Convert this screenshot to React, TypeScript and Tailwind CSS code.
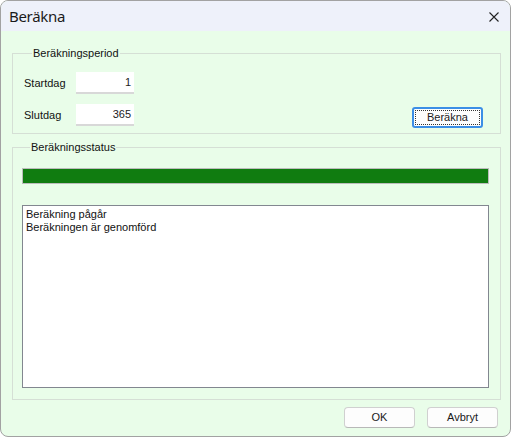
const ui = { fontFamily: '"Liberation Sans", Arial, sans-serif' };

function WinButton({ label, focused }: { label: string; focused?: boolean }) {
  if (focused) {
    return (
      <button className="w-[71px] h-[21px] rounded-[3px] border-2 border-[#3c8ee6] bg-[#fdfdfd] p-[1px] text-[11px] text-[#1a1a1a]">
        <span className="flex h-full w-full items-center justify-center border border-dotted border-[#333]">{label}</span>
      </button>
    );
  }
  return (
    <button className="w-[71px] h-[21px] rounded-[4px] border border-[#d0d0d0] border-b-[#b8b8b8] bg-[#fdfdfd] text-[11px] text-[#1a1a1a]">
      {label}
    </button>
  );
}

function NumField({ value }: { value: string }) {
  return (
    <div className="w-[58px] h-[22px] bg-white border-b-2 border-[#d8d8d8] flex items-center justify-end pr-[3px] text-[11px] text-[#222]">
      {value}
    </div>
  );
}

export default function App() {
  return (
    <div className="w-[511px] h-[437px] bg-white" style={ui}>
      <div className="w-full h-full flex flex-col rounded-[8px] border border-[#a2a2a2] overflow-hidden bg-[#e9fde9]">
        {/* titelrad */}
        <div className="h-[30px] bg-[#eef1fa] flex items-center justify-between pl-[8px] pr-[11px] shrink-0">
          <span className="text-[15px] text-[#1b1b1b] tracking-[-0.3px] pt-[1px]" style={{ fontFamily: '"Noto Sans", sans-serif' }}>
            Beräkna
          </span>
          <svg width="10" height="10" viewBox="0 0 10 10" className="mt-[1px]">
            <path d="M0.5 0.5 L9.5 9.5 M9.5 0.5 L0.5 9.5" stroke="#222" strokeWidth="1.1" />
          </svg>
        </div>

        <div className="flex-1 flex flex-col px-0">
          <fieldset className="mt-[16px] ml-[11px] mr-[9px] h-[87px] border border-[#d5dfd5] pl-[11px] pr-[17px] pt-[12px]">
            <legend className="ml-[8px] px-[1px] text-[11px] leading-[13px] text-[#111]">Beräkningsperiod</legend>
            <div className="flex flex-col gap-[10px]">
              <div className="flex items-center h-[22px]">
                <span className="w-[52px] text-[11px] text-[#111]">Startdag</span>
                <NumField value="1" />
              </div>
              <div className="flex items-center h-[22px]">
                <span className="w-[52px] text-[11px] text-[#111]">Slutdag</span>
                <NumField value="365" />
                <div className="ml-auto self-start">
                  <WinButton label="Beräkna" focused />
                </div>
              </div>
            </div>
          </fieldset>

          <fieldset className="mt-[7px] ml-[11px] mr-[9px] h-[259px] border border-[#d5dfd5] pl-[9px] pr-[11px] pt-[14px] flex flex-col">
            <legend className="ml-[8px] px-[1px] text-[11px] leading-[13px] text-[#111]">Beräkningsstatus</legend>
            <div className="h-[16px] border border-[#bcbcbc] bg-[#e6e6e6]">
              <div className="h-full bg-[#107c10]" style={{ width: "100%" }} />
            </div>
            <div className="mt-[21px] h-[183px] bg-white border border-[#828790] px-[3px] pt-[2px] text-[11px] leading-[13px] text-[#111]">
              <div>Beräkning pågår</div>
              <div>Beräkningen är genomförd</div>
            </div>
          </fieldset>

          <div className="mt-[7px] mr-[12px] flex justify-end gap-[12px]">
            <WinButton label="OK" />
            <WinButton label="Avbryt" />
          </div>
        </div>
      </div>
    </div>
  );
}
